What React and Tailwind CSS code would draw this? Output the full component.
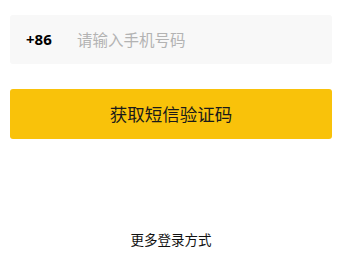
export default function App() {
  return (
    <div className="w-[342px] h-[256px] bg-white px-[10px] pt-[15px] flex flex-col font-['Noto_Sans_CJK_SC',sans-serif]">
      <div className="h-[49px] bg-[#f8f8f8] rounded-[3px] flex items-center pl-[16px]">
        <span className="text-[15px] font-bold text-black w-[51px] font-['Noto_Sans','Noto_Sans_CJK_SC',sans-serif]">+86</span>
        <span className="text-[15.5px] text-[#b3b3b3]">请输入手机号码</span>
      </div>
      <button className="mt-[25px] h-[50px] bg-[#f9c20a] rounded-[3px] flex items-center justify-center text-[17.5px] text-[#1a1a1a]">
        获取短信验证码
      </button>
      <div className="mt-[91px] text-center text-[13.5px] text-[#111] leading-[18px]">
        更多登录方式
      </div>
    </div>
  );
}
